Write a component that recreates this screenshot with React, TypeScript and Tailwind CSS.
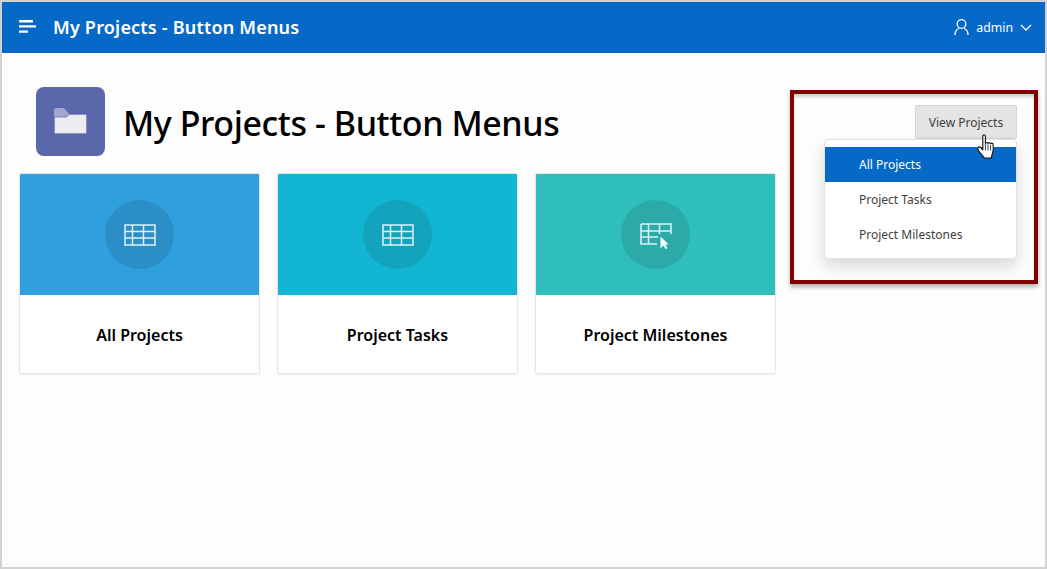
import React from "react";

function Burger() {
  return (
    <svg width="18" height="13" viewBox="0 0 18 13" className="block mb-[2px]">
      <rect x="0" y="0" width="14" height="2.400" rx="0.5" fill="#fff" />
      <rect x="0" y="5.200" width="17" height="2.400" rx="0.5" fill="#fff" />
      <rect x="0" y="10.400" width="9" height="2.400" rx="0.5" fill="#fff" />
    </svg>
  );
}

function Folder() {
  return (
    <svg width="33" height="26" viewBox="0 0 33 26" className="block mb-[1px]">
      <path d="M0 2.500A2.500 2.500 0 0 1 2.500 0H10l5 6v3H0z" fill="#a3a7cf" />
      <path d="M.3 25.700V9h12.300l2.500-2.700h17.600v19.400z" fill="#edecf2" stroke="#4c5594" strokeWidth="0.6" />
    </svg>
  );
}

function TableIcon() {
  return (
    <svg width="32" height="22" viewBox="0 0 32 22" fill="none" stroke="#dcf2fb" strokeWidth="1.500" className="block">
      <rect x="1" y="1" width="30" height="20" />
      <path d="M1 7.500h30M1 14h30M8.500 1v20M19.500 1v20" />
    </svg>
  );
}

function TableCursor() {
  return (
    <svg width="32" height="28" viewBox="0 0 32 28" className="block">
      <path d="M1 3h30v10M1 3v20h16M1 10h30M1 16h17M8.500 3v20M19.500 3v10" fill="none" stroke="#dcf2fb" strokeWidth="1.500" />
      <path d="M20.500 15.500v11.800l2.800-2.700 2.300 3.400 1.900-1-2.200-3.400h3.300z" fill="#fff" />
    </svg>
  );
}

function Hand() {
  return (
    <svg width="20" height="26" viewBox="0 0 20 26" className="block">
      <path
        d="M5.800 2.200c0-1.600 2.600-1.600 2.600 0v7.300c.2-1.400 2.500-1.400 2.600.1.200-1.300 2.400-1.200 2.600.2.300-1 2.400-.9 2.500.6.400 3.800.4 6.500-.8 9.300-.5 1.300-.9 2.600-.9 4.300H7.200c-.5-1.500-1.800-2.600-3.300-4.300C2.600 18.200.8 16.200.8 14.400c0-1.800 2-1.900 2.800-.8l2.200 2.400z"
        fill="#fff"
        stroke="#111"
        strokeWidth="1.100"
        strokeLinejoin="round"
      />
      <path d="M8.400 10v6.500M11 10.500v6M13.600 11v5.500" stroke="#111" strokeWidth="0.800" fill="none" />
    </svg>
  );
}

function Card({ title, bg, circle, icon }: { title: string; bg: string; circle: string; icon: React.ReactNode }) {
  return (
    <div className="w-[241px] h-[201px] flex flex-col bg-white rounded-[2px] border border-[#e6e6e6] shadow-[0_1px_2px_rgba(0,0,0,0.06)] overflow-hidden">
      <div className={`h-[121px] flex items-center justify-center ${bg}`}>
        <div className={`w-[69px] h-[69px] rounded-full flex items-center justify-center ${circle}`}>{icon}</div>
      </div>
      <div className="flex-1 flex items-center justify-center text-[16px] font-semibold text-black pt-[1px]">{title}</div>
    </div>
  );
}

export default function App() {
  return (
    <div
      className="w-[1047px] h-[569px] border-2 border-[#d2d2d2] bg-[#fdfdfd] flex flex-col overflow-hidden"
      style={{ fontFamily: '"Noto Sans", "Open Sans", sans-serif' }}
    >
      <header className="h-[51px] shrink-0 bg-[#0769c7] flex items-center text-white">
        <div className="ml-[17px] mr-[16px]"><Burger /></div>
        <div className="text-[18px] font-semibold tracking-[0.2px]">My Projects - Button Menus</div>
        <div className="ml-auto flex items-center mr-[13px]">
          <svg width="15" height="16" viewBox="0 0 15 16" fill="none" stroke="#fff" strokeWidth="1.300" className="block mr-[7px] mb-[1px]">
            <circle cx="7.500" cy="5" r="4.300" />
            <path d="M1 16c0-3.800 2-5.800 4-6.500M14 16c0-3.800-2-5.800-4-6.500" />
          </svg>
          <span className="text-[12.3px] mr-[7px] pt-[1px]">admin</span>
          <svg width="12" height="7" viewBox="0 0 12 7" fill="none" stroke="#fff" strokeWidth="1.300" className="block">
            <path d="M1 1l5 5 5-5" />
          </svg>
        </div>
      </header>
      <main className="flex-1 flex">
        <div className="pl-[17px] w-[788px] shrink-0">
          <div className="mt-[34px] ml-[17px] flex items-center">
            <div className="w-[69px] h-[69px] rounded-[8px] bg-[#5a67aa] flex items-center justify-center">
              <Folder />
            </div>
            <h1 className="ml-[18px] mt-[2px] text-[34px] font-medium text-black tracking-[-0.42px] leading-[40px]">My Projects - Button Menus</h1>
          </div>
          <div className="mt-[17px] flex gap-[17px]">
            <Card title="All Projects" bg="bg-[#309fdd]" circle="bg-[#2c8ec6]" icon={<TableIcon />} />
            <Card title="Project Tasks" bg="bg-[#13b6d2]" circle="bg-[#13a3bc]" icon={<TableIcon />} />
            <Card title="Project Milestones" bg="bg-[#2ebfbc]" circle="bg-[#2baaa8]" icon={<TableCursor />} />
          </div>
        </div>
        <div className="mt-[37px] w-[248px] h-[194px] border-4 border-[#7f0000] bg-[#fdfdfd] shadow-[inset_0_3px_3px_rgba(0,0,0,0.18),0_3px_4px_rgba(0,0,0,0.3)] relative flex flex-col items-end pr-[17px] pt-[11px]">
          <div className="w-[102px] h-[34px] pt-[1px] rounded-[2px] bg-[#e4e4e4] border border-[#d4d4d4] flex items-center justify-center text-[12px] text-[#404040] whitespace-nowrap">View Projects</div>
          <div className="w-[193px] h-[120px] rounded-[4px] bg-white border border-[#e2e2e2] shadow-[0_8px_16px_rgba(0,0,0,0.14)] pt-[7px] text-[12px] text-[#404040]">
            <div className="h-[35px] pl-[34px] pt-[1px] flex items-center bg-[#0769c7] text-white">All Projects</div>
            <div className="h-[35px] pl-[34px] flex items-center">Project Tasks</div>
            <div className="h-[35px] pl-[34px] flex items-center">Project Milestones</div>
          </div>
          <div className="absolute left-[183px] top-[40px]"><Hand /></div>
        </div>
      </main>
    </div>
  );
}
